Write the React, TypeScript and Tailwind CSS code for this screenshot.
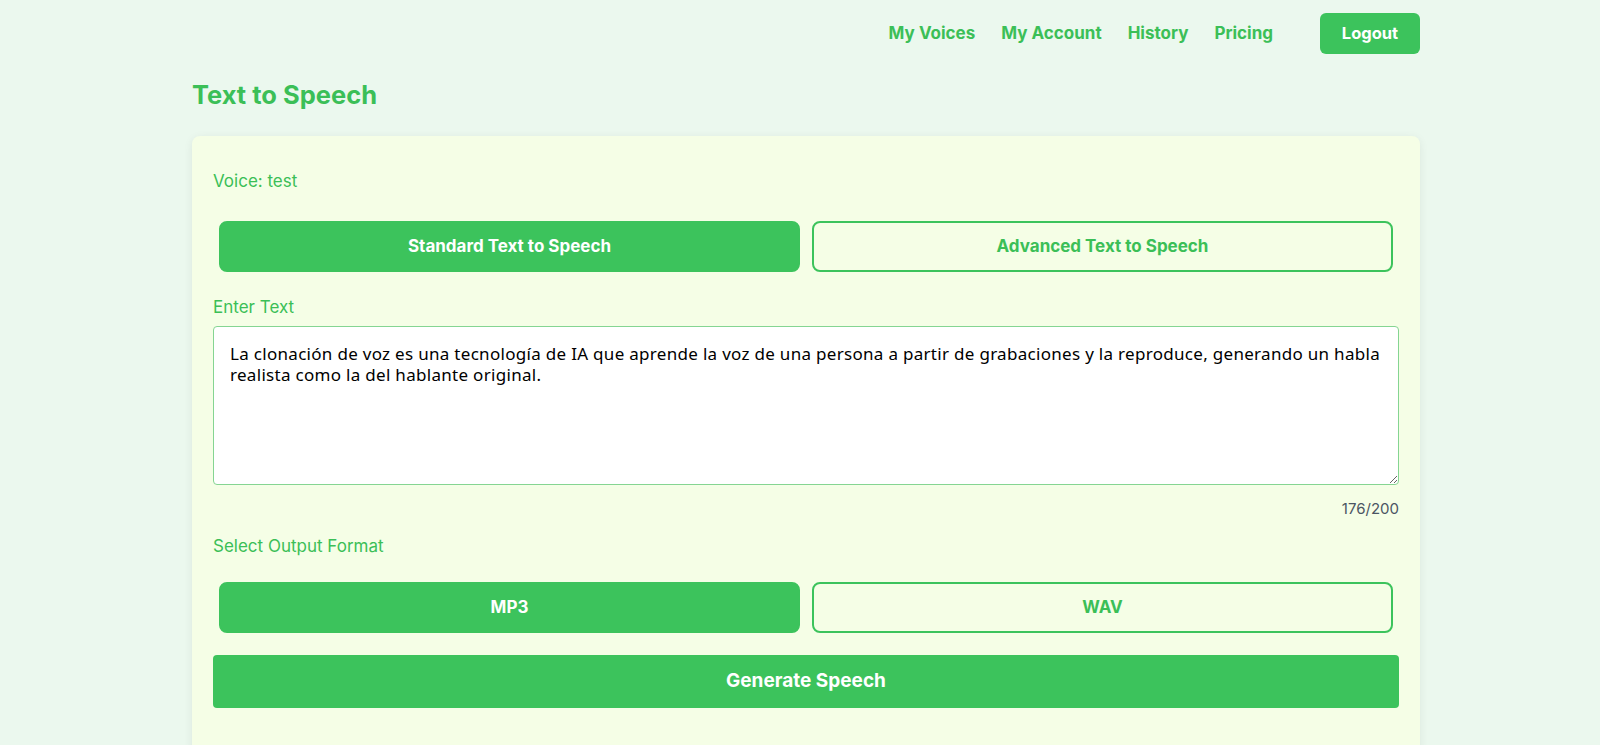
import { useState } from "react";

const sampleText =
  "La clonación de voz es una tecnología de IA que aprende la voz de una persona a partir de grabaciones y la reproduce, generando un habla realista como la del hablante original.";

function ToggleButton({
  label,
  active,
  onClick,
}: {
  label: string;
  active: boolean;
  onClick: () => void;
}) {
  return (
    <button
      onClick={onClick}
      className={
        active
          ? "flex-1 m-[6px] h-[51px] rounded-lg bg-[#3cc35c] border-2 border-[#3cc35c] text-white font-bold text-[17px]"
          : "flex-1 m-[6px] h-[51px] rounded-lg bg-transparent border-2 border-[#3cc35c] text-[#3bbf57] font-bold text-[17px]"
      }
    >
      {label}
    </button>
  );
}

export default function App() {
  const [mode, setMode] = useState("standard");
  const [format, setFormat] = useState("mp3");
  const [text, setText] = useState(sampleText);

  return (
    <div className="min-h-[745px] bg-[#ebf8ee] font-['Inter',sans-serif] pl-[192px] w-[1600px]">
      <div className="w-[1228px]">
        <nav className="flex items-center justify-end pt-[13px] h-[54px]">
          <div className="flex items-center gap-[26px] text-[#3bbf57] font-bold text-[17px]">
            <a>My Voices</a>
            <a>My Account</a>
            <a>History</a>
            <a>Pricing</a>
          </div>
          <button className="ml-[47px] w-[100px] h-[41px] rounded-md bg-[#3cc35c] text-white font-bold text-[16.5px]">
            Logout
          </button>
        </nav>

        <h1 className="mt-[25px] text-[25.5px] leading-8 font-bold text-[#3bbf57]">
          Text to Speech
        </h1>

        <div className="mt-[25px] bg-[#f5fee6] rounded-lg shadow-[0_2px_10px_rgba(0,0,0,0.07)] px-[21px] pt-[33px] pb-10 min-h-[620px]">
          <div className="text-[17px] leading-6 text-[#3bbf57]">Voice: test</div>

          <div className="flex mt-[22px]">
            <ToggleButton
              label="Standard Text to Speech"
              active={mode === "standard"}
              onClick={() => setMode("standard")}
            />
            <ToggleButton
              label="Advanced Text to Speech"
              active={mode === "advanced"}
              onClick={() => setMode("advanced")}
            />
          </div>

          <label className="block mt-[17px] text-[17px] leading-6 text-[#3bbf57]">
            Enter Text
          </label>
          <textarea
            value={text}
            onChange={(e) => setText(e.target.value)}
            className="mt-[7px] block w-full h-[159px] bg-white border border-[#85d592] rounded-[4px] p-4 text-[17px] tracking-[0.3px] leading-[21px] text-black font-['Noto_Sans',sans-serif] outline-none"
          />
          <div className="mt-[14px] text-right text-[15px] leading-5 text-[#4b5563]">
            {text.length}/200
          </div>

          <div className="mt-[15px] text-[17px] leading-6 text-[#3bbf57]">
            Select Output Format
          </div>
          <div className="flex mt-[18px]">
            <ToggleButton
              label="MP3"
              active={format === "mp3"}
              onClick={() => setFormat("mp3")}
            />
            <ToggleButton
              label="WAV"
              active={format === "wav"}
              onClick={() => setFormat("wav")}
            />
          </div>

          <button className="mt-[16px] w-full h-[53px] rounded bg-[#3cc35c] text-white font-bold text-[19px]">
            Generate Speech
          </button>
        </div>
      </div>
    </div>
  );
}
